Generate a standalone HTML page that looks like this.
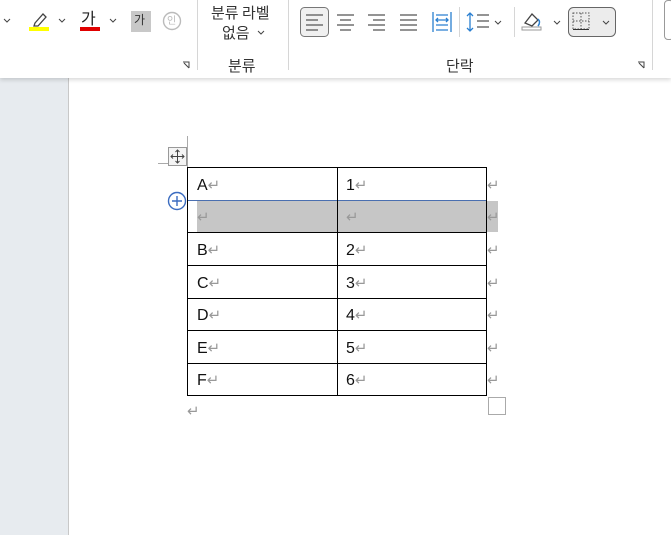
<!DOCTYPE html>
<html><head><meta charset="utf-8"><style>
*{margin:0;padding:0;box-sizing:border-box}
body{width:671px;height:535px;position:relative;overflow:hidden;background:#fff;font-family:"Liberation Sans","Noto Sans CJK KR",sans-serif;color:#222}
.a{position:absolute}
.rib{left:0;top:0;width:671px;height:78px;background:#fff;box-shadow:0 2px 4px rgba(0,0,0,.15);z-index:2}
.sep{width:1px;background:#d6d6d6}
.ko{font-family:"Noto Sans CJK KR",sans-serif;font-size:15px;color:#333}
.h{height:1px;background:#000;left:187px;width:300px}
.v{width:1px;background:#000;top:167px;height:229px}
.t{font-size:16px;color:#111;line-height:18px}
.r{color:#999;font-size:15px;font-family:"DejaVu Sans",sans-serif;line-height:18px}
</style></head><body>
<div class="a" style="left:0;top:78px;width:68px;height:457px;background:#e7ebef"></div>
<div class="a" style="left:68px;top:78px;width:1px;height:457px;background:#c8c8c8"></div>
<div class="a rib">
 <svg class="a" style="left:0;top:0" width="671" height="78">
  <path d="M4 19l3 3 3-3" stroke="#444" fill="none"/>
  <path d="M35 23l8-9 3 3-8 9h-4z" stroke="#444" fill="none" stroke-width="1.3"/>
  <rect x="29" y="27" width="20" height="4" fill="#ffff00"/>
  <path d="M59 19l3 3 3-3" stroke="#444" fill="none"/>
  <rect x="80" y="27" width="20" height="4" fill="#e00000"/>
  <path d="M110 19l3 3 3-3" stroke="#444" fill="none"/>
  <rect x="131" y="11" width="20" height="21" fill="#c8c8c8"/>
  <circle cx="172" cy="21" r="8.5" fill="none" stroke="#bbb" stroke-width="1.4"/>
  <path d="M258 31l3 3 3-3" stroke="#444" fill="none"/>
  <path d="M183 62h6v6M184 63l5 5" stroke="#444" fill="none"/>
  <rect x="300.5" y="7.5" width="28" height="29" rx="4" fill="#f0f0f0" stroke="#777"/>
  <path d="M306 15h17M306 20h12M306 25h17M306 30h12" stroke="#555" stroke-width="1.3"/>
  <path d="M337 15h17M340 20h11M337 25h17M340 30h11" stroke="#555" stroke-width="1.3"/>
  <path d="M368 15h17M373 20h12M368 25h17M373 30h12" stroke="#555" stroke-width="1.3"/>
  <path d="M400 15h17M400 20h17M400 25h17M400 30h17" stroke="#555" stroke-width="1.3"/>
  <path d="M433 12v20M451 12v20M436 20h12M438 18l-2 2 2 2M446 18l2 2-2 2M436 15h12M436 25h12M436 30h12" stroke="#2a7fd0" stroke-width="1.3" fill="none"/>
  <path d="M470 13v18M467 16l3-3 3 3M467 28l3 3 3-3" stroke="#2a7fd0" stroke-width="1.3" fill="none"/>
  <path d="M477 15h12M477 21h12M477 27h12" stroke="#555" stroke-width="1.3"/>
  <path d="M495 21l3 3 3-3" stroke="#444" fill="none"/>
  <path d="M525 23l7-9 6 6-6 6z" stroke="#444" fill="none" stroke-width="1.3"/>
  <path d="M538 19q3 3 0 7" stroke="#2a7fd0" fill="none" stroke-width="1.5"/>
  <rect x="522" y="27" width="19" height="3" fill="none" stroke="#999"/>
  <path d="M554 21l3 3 3-3" stroke="#444" fill="none"/>
  <rect x="568.5" y="7.5" width="47" height="29" rx="5" fill="#ececec" stroke="#666"/>
  <path d="M573 13h16v16h-16zM581 13v16M573 21h16" stroke="#555" stroke-dasharray="1.5 1.5" fill="none"/>
  <path d="M573 29.5h16" stroke="#333"/>
  <path d="M603 21l3 3 3-3" stroke="#444" fill="none"/>
  <path d="M638 62h6v6M639 63l5 5" stroke="#444" fill="none"/>
 </svg>
 <div class="a" style="left:81px;top:8px;font-size:16px;font-family:'Noto Sans CJK KR';color:#222;line-height:18px">가</div>
 <div class="a" style="left:134px;top:12px;font-size:12px;font-family:'Noto Sans CJK KR';color:#333;line-height:16px">가</div>
 <div class="a" style="left:167px;top:14px;font-size:10px;font-family:'Noto Sans CJK KR';color:#bbb;line-height:12px">인</div>
 <div class="a sep" style="left:197px;top:0;height:70px"></div>
 <div class="a ko" style="left:211px;top:3px;line-height:20px">분류 라벨</div>
 <div class="a ko" style="left:222px;top:23px;line-height:20px">없음</div>
 <div class="a ko" style="left:228px;top:56px;line-height:20px">분류</div>
 <div class="a sep" style="left:288px;top:0;height:70px"></div>
 <div class="a sep" style="left:459px;top:7px;height:30px"></div>
 <div class="a sep" style="left:514px;top:7px;height:30px"></div>
 <div class="a ko" style="left:446px;top:56px;line-height:20px">단락</div>
 <div class="a sep" style="left:652px;top:0;height:70px"></div>
 <div class="a" style="left:664px;top:0;width:10px;height:40px;border:1px solid #999;border-radius:4px"></div>
</div>
<div class="a" style="left:187px;top:136px;width:1px;height:31px;background:#aaa"></div>
<div class="a" style="left:158px;top:163px;width:30px;height:1px;background:#aaa"></div>
<div class="a" style="left:168px;top:147px;width:19px;height:19px;border:1px solid #999;background:#f4f4f4"></div>
<svg class="a" style="left:168px;top:147px" width="19" height="19"><path d="M9.5 3v13M3 9.5h13M7.5 5l2-2 2 2M7.5 14l2 2 2-2M5 7.5l-2 2 2 2M14 7.5l2 2-2 2" stroke="#444" fill="none"/></svg>
<div class="a" style="left:197px;top:201px;width:301px;height:31px;background:#c6c6c6"></div>
<div class="a h" style="top:167px"></div>
<div class="a h" style="top:232px"></div>
<div class="a h" style="top:265px"></div>
<div class="a h" style="top:298px"></div>
<div class="a h" style="top:330px"></div>
<div class="a h" style="top:363px"></div>
<div class="a h" style="top:395px"></div>
<div class="a" style="left:187px;top:200px;width:300px;height:1px;background:#4a6fb0"></div>
<div class="a v" style="left:187px"></div>
<div class="a v" style="left:337px"></div>
<div class="a v" style="left:486px"></div>
<svg class="a" style="left:167px;top:191px" width="20" height="20"><circle cx="10" cy="10" r="8.5" fill="#fff" stroke="#3b6cc0" stroke-width="1.4"/><path d="M10 5v10M5 10h10" stroke="#3b6cc0" stroke-width="1.4"/></svg>
<div class="a t" style="left:197px;top:176px">A<span class="r">↵</span></div>
<div class="a t" style="left:346px;top:176px">1<span class="r">↵</span></div>
<div class="a t" style="left:197px;top:208px"><span class="r">↵</span></div>
<div class="a t" style="left:346px;top:208px"><span class="r">↵</span></div>
<div class="a t" style="left:197px;top:241px">B<span class="r">↵</span></div>
<div class="a t" style="left:346px;top:241px">2<span class="r">↵</span></div>
<div class="a t" style="left:197px;top:274px">C<span class="r">↵</span></div>
<div class="a t" style="left:346px;top:274px">3<span class="r">↵</span></div>
<div class="a t" style="left:197px;top:306px">D<span class="r">↵</span></div>
<div class="a t" style="left:346px;top:306px">4<span class="r">↵</span></div>
<div class="a t" style="left:197px;top:339px">E<span class="r">↵</span></div>
<div class="a t" style="left:346px;top:339px">5<span class="r">↵</span></div>
<div class="a t" style="left:197px;top:371px">F<span class="r">↵</span></div>
<div class="a t" style="left:346px;top:371px">6<span class="r">↵</span></div>
<div class="a r" style="left:487px;top:176px">↵</div>
<div class="a r" style="left:487px;top:208px">↵</div>
<div class="a r" style="left:487px;top:241px">↵</div>
<div class="a r" style="left:487px;top:274px">↵</div>
<div class="a r" style="left:487px;top:306px">↵</div>
<div class="a r" style="left:487px;top:339px">↵</div>
<div class="a r" style="left:487px;top:371px">↵</div>
<div class="a r" style="left:187px;top:402px">↵</div>
<div class="a" style="left:488px;top:397px;width:18px;height:18px;border:1.5px solid #aaa"></div>
</body></html>
